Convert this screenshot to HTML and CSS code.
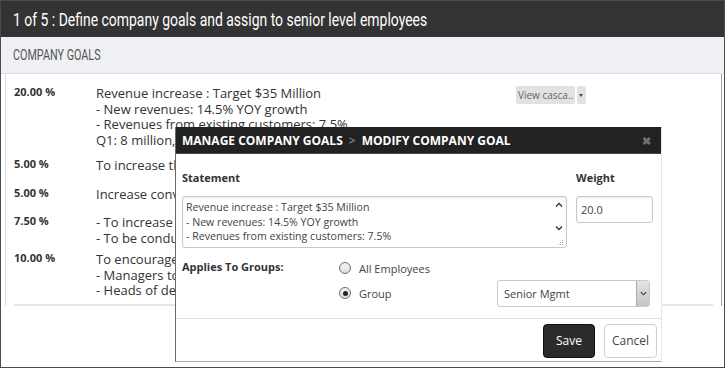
FILE: index.html
```html
<!DOCTYPE html>
<html>
<head>
<meta charset="utf-8">
<link rel="stylesheet" href="styles.css">
</head>
<body>
<div class="frame">
  <div class="titlebar"><span class="narrow">1 of 5 : Define company goals and assign to senior level employees</span></div>
  <div class="band"><span class="narrow">COMPANY GOALS</span></div>
  <div class="panel">
    <div class="goal first">
      <div class="pct">20.00 %</div>
      <div class="desc">
        <div>Revenue increase : Target $35 Million</div>
        <div>- New revenues: 14.5% YOY growth</div>
        <div>- Revenues from existing customers: 7.5%</div>
        <div>Q1: 8 million, Q2: 8 million, Q3: 9 million, Q4: 10 million</div>
      </div>
      <div class="actions"><span class="btn-view">View casca..</span><span class="btn-caret"></span></div>
    </div>
    <div class="goal">
      <div class="pct">5.00 %</div>
      <div class="desc"><div>To increase the customer retention rate by 10%</div></div>
    </div>
    <div class="goal spaced">
      <div class="pct">5.00 %</div>
      <div class="desc"><div>Increase conversion rate of leads to customers</div></div>
    </div>
    <div class="goal spaced">
      <div class="pct">7.50 %</div>
      <div class="desc">
        <div>- To increase the employee engagement score</div>
        <div>- To be conducted through quarterly surveys</div>
      </div>
    </div>
    <div class="goal">
      <div class="pct">10.00 %</div>
      <div class="desc">
        <div>To encourage a culture of learning</div>
        <div>- Managers to enroll in leadership training</div>
        <div>- Heads of departments to mentor new hires</div>
      </div>
    </div>
    <div class="rule"></div>
  </div>

  <div class="modal">
    <div class="modal-head">
      <span class="crumb">MANAGE COMPANY GOALS</span><span class="sep">&gt;</span><span class="crumb">MODIFY COMPANY GOAL</span>
      <span class="close">&#x2716;</span>
    </div>
    <div class="modal-body">
      <div class="form-top">
        <div class="col-statement">
          <div class="lbl">Statement</div>
          <div class="ta-box">
            <textarea class="ta">Revenue increase : Target $35 Million
- New revenues: 14.5% YOY growth
- Revenues from existing customers: 7.5%
Q1: 8 million, Q2: 8 million</textarea>
            <div class="ta-scroll">
              <svg class="chev" width="8" height="6" viewBox="0 0 8 6"><path d="M1 4.5 L4 1.5 L7 4.5" fill="none" stroke="#333" stroke-width="1.3"/></svg>
              <svg class="chev" width="8" height="6" viewBox="0 0 8 6"><path d="M1 1.5 L4 4.5 L7 1.5" fill="none" stroke="#333" stroke-width="1.3"/></svg>
              <svg class="grip" width="6" height="6" viewBox="0 0 6 6"><g fill="#aaa"><rect x="4" y="0" width="1" height="1"/><rect x="2" y="2" width="1" height="1"/><rect x="4" y="2" width="1" height="1"/><rect x="0" y="4" width="1" height="1"/><rect x="2" y="4" width="1" height="1"/><rect x="4" y="4" width="1" height="1"/></g></svg>
            </div>
          </div>
        </div>
        <div class="col-weight">
          <div class="lbl">Weight</div>
          <div class="input">20.0</div>
        </div>
      </div>
      <div class="applies">
        <div class="lbl applies-lbl">Applies To Groups:</div>
        <div class="options">
          <div class="opt"><span class="radio"></span><span>All Employees</span></div>
          <div class="opt"><span class="radio checked"></span><span>Group</span>
            <div class="select"><span class="select-val">Senior Mgmt</span><span class="select-arrow"><svg width="7" height="5" viewBox="0 0 7 5"><path d="M0.8 1 L3.5 3.8 L6.2 1" fill="none" stroke="#444" stroke-width="1.1"/></svg></span></div>
          </div>
        </div>
      </div>
    </div>
    <div class="modal-foot">
      <button class="btn btn-save">Save</button>
      <button class="btn btn-cancel">Cancel</button>
    </div>
  </div>
</div>
</body>
</html>
```

FILE: styles.css
```css
* { box-sizing: border-box; }
html, body { margin: 0; padding: 0; background: #fff; }
body { width: 725px; height: 368px; overflow: hidden; font-family: "Open Sans", "Liberation Sans", sans-serif; color: #333; }

.frame {
  position: relative;
  width: 725px;
  height: 368px;
  border: 1px solid #4b4b4b;
  background: #fff;
  overflow: hidden;
}

.narrow {
  display: inline-block;
  transform-origin: left center;
  white-space: nowrap;
}

.titlebar {
  height: 36px;
  background: #333;
  color: #fff;
  font-family: Roboto, "Liberation Sans", sans-serif;
  font-size: 18px;
  line-height: 37px;
  padding-left: 12px;
  white-space: nowrap;
}
.titlebar .narrow { transform: scaleX(0.775); }

.band {
  height: 37px;
  background: #eff0f3;
  border-bottom: 1px solid #dcdcdf;
  color: #555;
  font-family: Roboto, "Liberation Sans", sans-serif;
  font-size: 14px;
  line-height: 37px;
  padding-left: 12px;
}
.band .narrow { transform: scaleX(0.77); }

.panel {
  margin: 0 2px 0 4px;
  height: 232px;
  border-left: 1px solid #dadada;
  border-right: 1px solid #a0a0a0;
  padding: 12px 8px 0 8px;
}

.goal {
  display: grid;
  grid-template-columns: 82px 420px auto;
  align-items: start;
}
.goal + .goal { margin-top: 6px; }
.goal.first + .goal { margin-top: 10px; }
.goal.spaced { margin-top: 13px; }

.pct {
  font-size: 11px;
  font-weight: 700;
  line-height: 15.5px;
  margin-top: -2px;
}
.desc {
  font-size: 13px;
  line-height: 15.5px;
  white-space: nowrap;
}

.actions { display: flex; gap: 2px; }
.btn-view {
  height: 18px;
  padding: 0 2px;
  background: #e2e2e2;
  color: #666;
  font-size: 10px;
  line-height: 18px;
  border-radius: 2px;
}
.btn-caret {
  width: 9px;
  height: 18px;
  background: #e2e2e2;
  border-radius: 2px;
  position: relative;
}
.btn-caret::after {
  content: "";
  position: absolute;
  left: 2px;
  top: 8px;
  border-left: 2.5px solid transparent;
  border-right: 2.5px solid transparent;
  border-top: 3px solid #444;
}

.rule {
  margin-top: 5px;
  height: 2px;
  background: #e6e6e6;
}

/* modal */
.modal {
  position: absolute;
  left: 174px;
  top: 126px;
  width: 487px;
  background: #fff;
  border-left: 1px solid #6a6a6a;
  border-bottom: 1px solid #a8a8a8;
  border-right: 1px dotted #cfcfcf;
}
.modal-head {
  height: 27px;
  background: #222;
  border-bottom: 1px solid #444;
  display: flex;
  align-items: center;
  padding: 0 10px 0 6px;
  color: #fff;
  font-size: 12px;
  font-weight: 700;
  white-space: nowrap;
}
.sep { color: #777; margin: 0 6px; font-weight: 700; }
.close { margin-left: auto; color: #6f6f6f; font-size: 11px; }

.modal-body { padding: 16px 8px 0 6px; }
.lbl { font-size: 11px; font-weight: 700; line-height: 16px; color: #333; }

.form-top { display: flex; gap: 9px; }
.col-statement { width: 385px; }
.col-weight { width: 77px; }
.col-statement .lbl, .col-weight .lbl { margin-bottom: 10px; }

.ta-box {
  height: 52px;
  border: 1px solid #c9c9c9;
  border-radius: 3px;
  box-shadow: inset 0 1px 2px rgba(0,0,0,0.08);
  display: flex;
}
.ta {
  flex: 1;
  border: 0;
  outline: 0;
  resize: none;
  overflow: hidden;
  background: transparent;
  font-family: "Open Sans", sans-serif;
  font-size: 10.6px;
  line-height: 14.5px;
  color: #444;
  padding: 3px 3px 0 3px;
  margin: 0;
  white-space: pre;
}
.ta-scroll {
  width: 14px;
  display: flex;
  flex-direction: column;
  align-items: center;
  padding-top: 5px;
}
.ta-scroll .chev { display: block; }
.ta-scroll .chev + .chev { margin-top: 17px; }
.ta-scroll .grip { margin-top: 9px; margin-left: 4px; }

.input {
  height: 27px;
  border: 1px solid #c9c9c9;
  border-radius: 3px;
  box-shadow: inset 0 1px 2px rgba(0,0,0,0.08);
  font-size: 11px;
  line-height: 25px;
  padding-left: 4px;
  color: #444;
}

.applies { display: flex; margin-top: 7.5px; margin-bottom: 12px; }
.applies-lbl { width: 157px; line-height: 21px; }
.options { flex: 1; }
.opt {
  height: 25px;
  display: flex;
  align-items: center;
  font-size: 11px;
  color: #444;
}
.radio {
  width: 12px;
  height: 12px;
  border-radius: 50%;
  border: 1px solid #6d6d6d;
  background: linear-gradient(#f4f4f4, #dedede);
  margin-right: 8px;
  position: relative;
}
.radio.checked::after {
  content: "";
  position: absolute;
  left: 2.5px;
  top: 2.5px;
  width: 5px;
  height: 5px;
  border-radius: 50%;
  background: #222;
}

.select {
  margin-left: auto;
  margin-right: 3px;
  width: 153px;
  height: 27px;
  border: 1px solid #c9c9c9;
  border-radius: 3px;
  display: flex;
  align-items: stretch;
  overflow: hidden;
}
.select-val { flex: 1; padding-left: 6px; line-height: 25px; font-size: 11px; color: #444; }
.select-arrow {
  width: 13px;
  border-left: 1px solid #a9a9a9;
  background: linear-gradient(#e4e4e4, #c4c4c4);
  display: flex;
  align-items: center;
  justify-content: center;
}

.modal-foot {
  border-top: 1px solid #e3e3e3;
  padding: 5px 4px 3px 0;
  display: flex;
  justify-content: flex-end;
  gap: 9px;
}
.btn {
  height: 34px;
  border-radius: 4px;
  font-family: "Open Sans", sans-serif;
  font-size: 12px;
  padding: 0;
  cursor: pointer;
}
.btn-save { width: 52px; background: #2b2b2b; border: 1px solid #0f0f0f; color: #fff; }
.btn-cancel { width: 53px; background: #fff; border: 1px solid #cfcfcf; color: #444; }
```
